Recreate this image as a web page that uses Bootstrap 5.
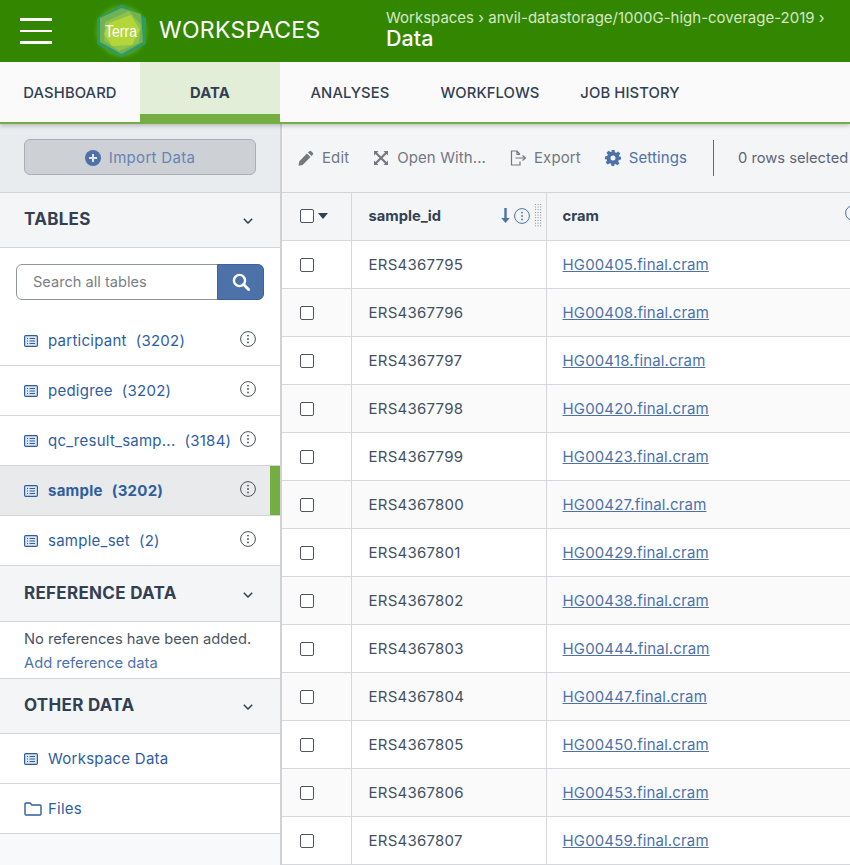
<!DOCTYPE html>
<html lang="en">
<head>
    <meta charset="UTF-8">
    <meta name="viewport" content="width=device-width, initial-scale=1.0">
    <title>Data - Terra</title>
    <link href="https://cdn.jsdelivr.net/npm/bootstrap@5.3.3/dist/css/bootstrap.min.css" rel="stylesheet">
    <style>
        html, body { height: 865px; overflow: hidden; }
        body { font-family: Inter, "Noto Sans", sans-serif; font-size: 15px; color: #333f52; background: #fff; }
        svg { display: block; flex-shrink: 0; }

        .top-bar { height: 62px; background: #338600; color: #fff; padding: 0; position: relative; z-index: 3; }
        .burger { width: 32px; margin-left: 20px; gap: 9px; }
        .burger span { height: 2.5px; background: #fff; display: block; }
        .logo-wrap { margin-left: 39px; width: 68px; }
        .app-name { font-size: 23px; letter-spacing: .3px; width: 227px; margin-top: -2px; }
        .crumbs { font-size: 15px; line-height: 18px; color: #d6e8c8; margin-top: -3px; white-space: nowrap; }
        .crumb-now { font-size: 21.5px; line-height: 23px; color: #fff; font-weight: 500; }

        .tab-bar { height: 62px; background: #fafafa; border-bottom: 2px solid #74ae43; box-shadow: 0 2px 4px rgba(0,0,0,.2); position: relative; z-index: 2; flex-wrap: nowrap; }
        .tab-link { width: 140px; height: 60px; line-height: 62px; padding: 0; text-align: center; font-size: 14.8px; letter-spacing: .1px; font-weight: 500; color: #333f52; }
        .tab-link.on { background: #e3eed8; border-bottom: 8px solid #74ae43; font-weight: 700; color: #333f52; }

        .work-area { height: 741px; }
        .side-pane { width: 282px; flex: none; background: #f8f9fb; border-right: 2px solid #cfd1d4; }
        .import-box { height: 69px; padding: 15px 24px 0; background: #e9ecef; border-bottom: 1px solid #d2d4d8; }
        .import-btn { width: 232px; height: 36px; padding: 2px 0 0; background: #cdd0d4; border: 1px solid #a9adb5; color: #6585b6; font-size: 15px; letter-spacing: .3px; }
        .sect-head { height: 55px; padding: 0 27px 0 24px; background: #f4f5f7; border-bottom: 1px solid #d2d4d8; font-size: 17px; letter-spacing: .3px; font-weight: 700; color: #333f52; }
        .sect-head svg { margin-top: 2px; }
        .ref-head { height: 56px; }
        .search-box { padding: 16px; background: #fff; }
        .search-box .form-control { height: 36px; border: 1px solid #8e949c; font-size: 14.6px; padding-left: 16px; box-shadow: none; }
        .search-box .form-control::placeholder { color: #7a7f87; }
        .search-btn { width: 47px; height: 36px; padding: 0; background: #4d72aa; border: 1px solid #3d6198; }
        .side-list .list-group-item { height: 50px; padding: 0 16px 0 24px; border-color: #d2d4d8; border-width: 0 0 1px; border-radius: 0; color: #2f5e9e; font-size: 15px; letter-spacing: .25px; position: relative; white-space: nowrap; }
        .row-count { margin-left: 9px; padding-top: 2px; }
        .row-label { margin-left: 10px; padding-top: 2px; }
        .files-label { margin-left: 6px; }
        .info-dot { position: absolute; right: 24px; top: 15px; color: #4a4f58; }
        .side-list .list-group-item.picked { background: #e9eaec; color: #2f5e9e; font-weight: 700; }
        .picked-bar { position: absolute; right: 0; top: 0; bottom: 0; width: 10px; background: #74ae43; }
        .no-refs { height: 57px; padding: 5px 24px 0; background: #fff; border-bottom: 1px solid #d2d4d8; line-height: 24px; font-size: 14.7px; color: #4a5464; }
        .no-refs a { color: #4d72aa; text-decoration: none; display: block; }

        .main-pane { min-width: 0; flex: 1; overflow: hidden; }
        .tool-bar { height: 69px; background: #f4f5f7; border-bottom: 1px solid #d2d4d8; padding-left: 16px; white-space: nowrap; }
        .tool-btn { display: flex; align-items: center; gap: 8px; padding: 0; border: 0; font-size: 15px; letter-spacing: .1px; color: #73787f; }
        .tool-btn.lit { color: #4d72aa; }
        .tool-sep { width: 1px; height: 36px; background: #5d6b80; margin: 0 24px 0 26px; }
        .rows-sel { color: #5d6673; font-size: 14.7px; }

        .grid-table { table-layout: fixed; width: 720px; margin: 0; font-size: 15px; letter-spacing: .25px; --bs-table-color: #45505f; }
        .grid-table th, .grid-table td { height: 48px; padding: 0 16px; vertical-align: middle; border: 0; border-bottom: 1px solid #d5d7da; border-right: 1px solid #d5d7da; }
        .grid-table td { padding-top: 2px; }
        .grid-table th { height: 47px; background: #f4f5f7; color: #333f52; font-weight: 700; font-size: 14.7px; letter-spacing: 0; }
        .grid-table tbody tr:nth-child(even) td { background: #fafafa; }
        .grid-table th:first-child, .grid-table td:first-child { padding-left: 18px; }
        .grid-table .check-col { width: 69px; }
        .grid-table .id-col { width: 195px; }
        .grid-table td:nth-child(2), .grid-table th:nth-child(2) { padding-left: 17px; }
        .grid-table td:nth-child(3), .grid-table th:nth-child(3) { padding-left: 16px; }
        .grid-table a { color: #4d72aa; letter-spacing: .15px; }
        .grid-table .form-check-input { width: 14px; height: 14px; margin: 0; border: 1px solid #4d5563; border-radius: 2px; display: block; }
        .head-tools { position: absolute; right: -12px; top: -2px; }
        .grip { width: 8px; height: 25px; margin-left: 4px; background-image: radial-gradient(#777 .7px, transparent .8px); background-size: 2.7px 2.7px; }
        .info-blue { color: #4d72aa; }
        .cram-info { left: 282px; top: 0; }
    </style>
</head>
<body>
    <svg width="0" height="0" class="position-absolute">
        <defs>
            <symbol id="list-ico" viewBox="0 0 14 12"><rect x=".6" y=".6" width="12.8" height="10.8" rx="1.2" fill="#dde6f2" stroke="#2f5e9e" stroke-width="1.2"/><path d="M3 3.5h1M3 6h1M3 8.5h1M5.5 3.5h5.5M5.5 6h5.5M5.5 8.5h5.5" stroke="#2f5e9e" stroke-width="1.2"/></symbol>
            <symbol id="info-ico" viewBox="0 0 16 16"><circle cx="8" cy="8" r="7.4" fill="none" stroke="currentColor" stroke-width="1"/><circle cx="8" cy="4.6" r=".9" fill="currentColor"/><circle cx="8" cy="8" r=".9" fill="currentColor"/><circle cx="8" cy="11.4" r=".9" fill="currentColor"/></symbol>
            <symbol id="chev-ico" viewBox="0 0 10 6"><path d="M.8.8 5 5 9.2.8" fill="none" stroke="#333f52" stroke-width="1.5"/></symbol>
        </defs>
    </svg>

    <header class="navbar top-bar flex-nowrap justify-content-start">
        <div class="burger d-flex flex-column"><span></span><span></span><span></span></div>
        <div class="logo-wrap">
            <svg width="60" height="60" viewBox="0 0 60 60">
                <defs><radialGradient id="glow"><stop offset=".7" stop-color="#6fc02a" stop-opacity=".9"/><stop offset="1" stop-color="#338600" stop-opacity="0"/></radialGradient></defs>
                <circle cx="30.5" cy="30" r="30" fill="url(#glow)"/>
                <path d="M30.5 3.500 55 17v26L30.5 56.500 6 43V17z" fill="#2f9a62"/>
                <path d="M30.5 7 50 13 52 41 30.5 53 9 41 9 17z" fill="#6fb356"/>
                <path d="M14 21 38 10 50 24 48 42 28 50 13 40z" fill="#8fc249"/>
                <path d="M18 22 40 14 49 29 41 44 21 45 13 33z" fill="#b3d63a"/>
                <text x="30" y="36" text-anchor="middle" font-family="Liberation Sans, sans-serif" font-size="17" fill="#fff" textLength="32" lengthAdjust="spacingAndGlyphs">Terra</text>
            </svg>
        </div>
        <div class="app-name">WORKSPACES</div>
        <div class="crumbs">
            <div>Workspaces › anvil-datastorage/1000G-high-coverage-2019 ›</div>
            <div class="crumb-now">Data</div>
        </div>
    </header>

    <nav class="nav tab-bar">
        <a class="nav-link tab-link" href="#">DASHBOARD</a>
        <a class="nav-link tab-link on" href="#">DATA</a>
        <a class="nav-link tab-link" href="#">ANALYSES</a>
        <a class="nav-link tab-link" href="#">WORKFLOWS</a>
        <a class="nav-link tab-link" href="#">JOB HISTORY</a>
    </nav>

    <div class="d-flex work-area">
        <aside class="side-pane">
            <div class="import-box">
                <button class="btn import-btn d-flex align-items-center justify-content-center gap-2" type="button">
                    <svg width="16" height="16" viewBox="0 0 16 16"><circle cx="8" cy="8" r="8" fill="#4d72aa"/><path d="M8 4v8M4 8h8" stroke="#e4e6e9" stroke-width="2"/></svg>
                    Import Data
                </button>
            </div>
            <div class="sect-head d-flex align-items-center justify-content-between">TABLES <svg width="10" height="6"><use href="#chev-ico"/></svg></div>
            <div class="search-box">
                <div class="input-group flex-nowrap">
                    <input class="form-control" type="text" placeholder="Search all tables">
                    <button class="btn search-btn d-flex align-items-center justify-content-center" type="button" aria-label="Search">
                        <svg width="18" height="18" viewBox="0 0 18 18"><circle cx="7.5" cy="7.5" r="5.6" fill="none" stroke="#fff" stroke-width="2.4"/><path d="m11.6 11.6 5 5" stroke="#fff" stroke-width="2.8" stroke-linecap="round"/></svg>
                    </button>
                </div>
            </div>
            <div class="list-group side-list">
                <a class="list-group-item d-flex align-items-center" href="#"><svg width="14" height="12"><use href="#list-ico"/></svg><span class="row-label">participant</span><span class="row-count">(3202)</span><svg class="info-dot" width="16" height="16"><use href="#info-ico"/></svg></a>
                <a class="list-group-item d-flex align-items-center" href="#"><svg width="14" height="12"><use href="#list-ico"/></svg><span class="row-label">pedigree</span><span class="row-count">(3202)</span><svg class="info-dot" width="16" height="16"><use href="#info-ico"/></svg></a>
                <a class="list-group-item d-flex align-items-center" href="#"><svg width="14" height="12"><use href="#list-ico"/></svg><span class="row-label">qc_result_samp...</span><span class="row-count">(3184)</span><svg class="info-dot" width="16" height="16"><use href="#info-ico"/></svg></a>
                <a class="list-group-item picked d-flex align-items-center" href="#"><svg width="14" height="12"><use href="#list-ico"/></svg><span class="row-label">sample</span><span class="row-count">(3202)</span><svg class="info-dot" width="16" height="16"><use href="#info-ico"/></svg><span class="picked-bar"></span></a>
                <a class="list-group-item d-flex align-items-center" href="#"><svg width="14" height="12"><use href="#list-ico"/></svg><span class="row-label">sample_set</span><span class="row-count">(2)</span><svg class="info-dot" width="16" height="16"><use href="#info-ico"/></svg></a>
            </div>
            <div class="sect-head ref-head d-flex align-items-center justify-content-between">REFERENCE DATA <svg width="10" height="6"><use href="#chev-ico"/></svg></div>
            <div class="no-refs">No references have been added.<a href="#">Add reference data</a></div>
            <div class="sect-head d-flex align-items-center justify-content-between">OTHER DATA <svg width="10" height="6"><use href="#chev-ico"/></svg></div>
            <div class="list-group side-list">
                <a class="list-group-item d-flex align-items-center" href="#"><svg width="14" height="12"><use href="#list-ico"/></svg><span class="row-label">Workspace Data</span></a>
                <a class="list-group-item d-flex align-items-center" href="#"><svg width="18" height="14" viewBox="0 0 18 14"><path d="M1 12V2a1 1 0 0 1 1-1h4l2 2h8a1 1 0 0 1 1 1v8a1 1 0 0 1-1 1H2a1 1 0 0 1-1-1z" fill="none" stroke="#2f5e9e" stroke-width="1.4"/></svg><span class="row-label files-label">Files</span></a>
            </div>
        </aside>

        <main class="main-pane">
            <div class="tool-bar d-flex align-items-center">
                <button class="btn tool-btn me-4" type="button"><svg width="16" height="16" viewBox="0 0 16 16"><path d="M11.2 1.2a1.4 1.4 0 0 1 2 0l1.6 1.6a1.4 1.4 0 0 1 0 2L13.5 6.1 9.9 2.5zM8.9 3.5l3.6 3.6-7.9 7.9-4.1.8.7-4.2z" fill="#73787f"/></svg>Edit</button>
                <button class="btn tool-btn me-4" type="button"><svg width="16" height="16" viewBox="0 0 16 16"><path d="M1 1h4.5L4 2.500 8 6.500l4-4L10.500 1H15v4.500L13.500 4l-4 4 4 4 1.500-1.500V15h-4.500l1.500-1.500-4-4-4 4L5.500 15H1v-4.500L2.500 12l4-4-4-4L1 5.500z" fill="#73787f"/></svg>Open With...</button>
                <button class="btn tool-btn me-4" type="button"><svg width="16" height="16" viewBox="0 0 16 16"><path d="M10 4.500 7 1H1.500v14H10v-3.500M7 1v3.500h3M5.500 8H15M12.500 5.500 15.500 8l-3 2.500" fill="none" stroke="#73787f" stroke-width="1.2"/></svg>Export</button>
                <button class="btn tool-btn lit" type="button"><svg width="16" height="16" viewBox="0 0 16 16"><path d="M6.500 0h3l.4 2.200 1.500.6 1.800-1.300 2.100 2.100-1.300 1.800.6 1.500L16 6.500v3l-2.200.4-.6 1.500 1.300 1.800-2.100 2.100-1.800-1.300-1.500.6L9.500 16h-3l-.4-2.200-1.500-.6-1.800 1.300-2.100-2.100 1.300-1.800-.6-1.500L0 9.500v-3l2.200-.4.6-1.500-1.300-1.800 2.100-2.100 1.800 1.300 1.500-.6zM8 5.500a2.500 2.500 0 1 0 0 5 2.500 2.500 0 0 0 0-5z" fill="#4d72aa" fill-rule="evenodd"/></svg>Settings</button>
                <div class="tool-sep"></div>
                <span class="rows-sel">0 rows selected</span>
            </div>
            <table class="table grid-table">
                <thead>
                    <tr>
                        <th class="check-col"><div class="d-flex align-items-center gap-1"><input class="form-check-input" type="checkbox" aria-label="Select all"><svg width="10" height="6" viewBox="0 0 10 6"><path d="M0 0h10L5 6z" fill="#333f52"/></svg></div></th>
                        <th class="id-col"><div class="position-relative">sample_id
                            <div class="head-tools d-flex align-items-center">
                                <svg width="9" height="15" viewBox="0 0 9 15"><path d="M3.300 0h2.400v10h3L4.500 15 .3 10h3z" fill="#4d72aa"/></svg>
                                <svg class="info-blue ms-1" width="16" height="16"><use href="#info-ico"/></svg>
                                <span class="grip"></span>
                            </div></div></th>
                        <th><div class="position-relative">cram<svg class="info-blue cram-info position-absolute" width="16" height="16"><use href="#info-ico"/></svg></div></th>
                    </tr>
                </thead>
                <tbody>
                    <tr><td><input class="form-check-input" type="checkbox" aria-label="Select row"></td><td>ERS4367795</td><td><a href="#">HG00405.final.cram</a></td></tr>
                    <tr><td><input class="form-check-input" type="checkbox" aria-label="Select row"></td><td>ERS4367796</td><td><a href="#">HG00408.final.cram</a></td></tr>
                    <tr><td><input class="form-check-input" type="checkbox" aria-label="Select row"></td><td>ERS4367797</td><td><a href="#">HG00418.final.cram</a></td></tr>
                    <tr><td><input class="form-check-input" type="checkbox" aria-label="Select row"></td><td>ERS4367798</td><td><a href="#">HG00420.final.cram</a></td></tr>
                    <tr><td><input class="form-check-input" type="checkbox" aria-label="Select row"></td><td>ERS4367799</td><td><a href="#">HG00423.final.cram</a></td></tr>
                    <tr><td><input class="form-check-input" type="checkbox" aria-label="Select row"></td><td>ERS4367800</td><td><a href="#">HG00427.final.cram</a></td></tr>
                    <tr><td><input class="form-check-input" type="checkbox" aria-label="Select row"></td><td>ERS4367801</td><td><a href="#">HG00429.final.cram</a></td></tr>
                    <tr><td><input class="form-check-input" type="checkbox" aria-label="Select row"></td><td>ERS4367802</td><td><a href="#">HG00438.final.cram</a></td></tr>
                    <tr><td><input class="form-check-input" type="checkbox" aria-label="Select row"></td><td>ERS4367803</td><td><a href="#">HG00444.final.cram</a></td></tr>
                    <tr><td><input class="form-check-input" type="checkbox" aria-label="Select row"></td><td>ERS4367804</td><td><a href="#">HG00447.final.cram</a></td></tr>
                    <tr><td><input class="form-check-input" type="checkbox" aria-label="Select row"></td><td>ERS4367805</td><td><a href="#">HG00450.final.cram</a></td></tr>
                    <tr><td><input class="form-check-input" type="checkbox" aria-label="Select row"></td><td>ERS4367806</td><td><a href="#">HG00453.final.cram</a></td></tr>
                    <tr><td><input class="form-check-input" type="checkbox" aria-label="Select row"></td><td>ERS4367807</td><td><a href="#">HG00459.final.cram</a></td></tr>
                </tbody>
            </table>
        </main>
    </div>

    <script src="https://cdn.jsdelivr.net/npm/bootstrap@5.3.3/dist/js/bootstrap.bundle.min.js"></script>
</body>
</html>
